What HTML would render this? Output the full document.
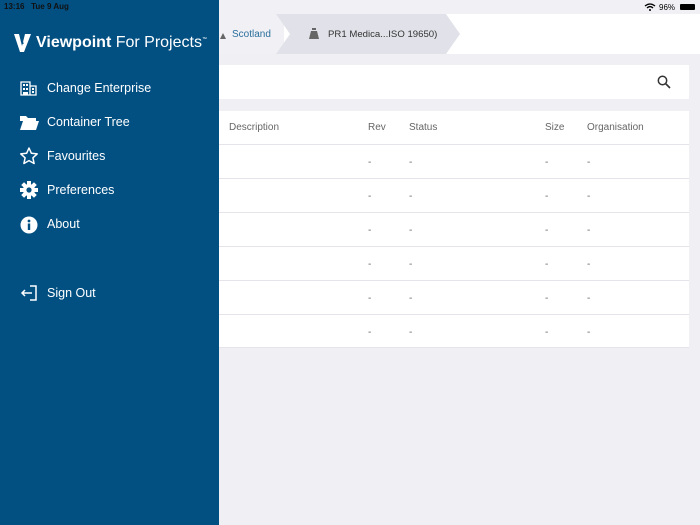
<!DOCTYPE html>
<html><head><style>
*{margin:0;padding:0;box-sizing:border-box}
body{width:700px;height:525px;overflow:hidden;background:#efeff4;font-family:"Liberation Sans",sans-serif;position:relative}
.abs{position:absolute}
.side{left:0;top:0;width:219px;height:525px;background:#024f82;color:#fff}
.item{position:absolute;left:47px;font-size:12.5px;color:#fff}
.ic{position:absolute;left:20px}
.hdr{font-size:10px;color:#555}
.cell{position:absolute;font-size:10px;color:#666}
.row{position:absolute;left:219px;width:470px;height:1px;background:#e4e4ea}
</style></head><body>
<div class="abs" style="left:0;top:0;width:700px;height:14px;background:#f0f0f5"></div>
<div class="abs" style="left:219px;top:14px;width:481px;height:40px;background:#fff"></div>
<div class="abs" style="left:219px;top:14px;width:65px;height:40px;background:#f0f0f5"></div>
<svg class="abs" style="left:276px;top:14px" width="190" height="40"><polygon points="0,0 170,0 184,20 170,40 0,40 14,20" fill="#e1e2e9"/></svg>
<div class="abs" style="left:232px;top:29px;font-size:10px;color:#2b6f9c">Scotland</div>
<svg class="abs" style="left:219px;top:30px" width="8" height="10"><path d="M1 9 L4 3 L7 9Z" fill="#666"/></svg>
<svg class="abs" style="left:308px;top:27px" width="12" height="14"><path d="M4 1h4v2h-4z M3 4h6l2 8h-10z" fill="#666"/></svg>
<div class="abs" style="left:328px;top:29px;font-size:9.6px;color:#333">PR1 Medica...ISO 19650)</div>
<div class="abs" style="left:659px;top:3px;font-size:8px;color:#000">96%</div>
<svg class="abs" style="left:644px;top:3px" width="12" height="8"><path d="M1 3 Q6 -1 11 3 M3 5 Q6 2 9 5" stroke="#000" stroke-width="1.3" fill="none"/><circle cx="6" cy="7" r="1" fill="#000"/></svg>
<div class="abs" style="left:680px;top:4px;width:15px;height:6px;background:#000;border-radius:1px"></div>
<div class="abs" style="left:219px;top:65px;width:470px;height:34px;background:#fff"></div>
<svg class="abs" style="left:657px;top:75px" width="14" height="14"><circle cx="5.5" cy="5.5" r="4.2" stroke="#333" stroke-width="1.5" fill="none"/><path d="M8.5 8.5 L13 13" stroke="#333" stroke-width="1.6"/></svg>
<div class="abs" style="left:219px;top:111px;width:470px;height:237px;background:#fff"></div>
<div class="cell hdr" style="left:229px;top:122px">Description</div>
<div class="cell hdr" style="left:368px;top:122px">Rev</div>
<div class="cell hdr" style="left:409px;top:122px">Status</div>
<div class="cell hdr" style="left:545px;top:122px">Size</div>
<div class="cell hdr" style="left:587px;top:122px">Organisation</div>
<div class="row" style="top:144px"></div>
<div class="row" style="top:178px"></div>
<div class="row" style="top:212px"></div>
<div class="row" style="top:246px"></div>
<div class="row" style="top:280px"></div>
<div class="row" style="top:314px"></div>
<div class="row" style="top:347px"></div>
<div style="position:absolute;left:0;top:1px">
<div class="cell" style="left:368px;top:156px">-</div><div class="cell" style="left:409px;top:156px">-</div><div class="cell" style="left:545px;top:156px">-</div><div class="cell" style="left:587px;top:156px">-</div>
<div class="cell" style="left:368px;top:190px">-</div><div class="cell" style="left:409px;top:190px">-</div><div class="cell" style="left:545px;top:190px">-</div><div class="cell" style="left:587px;top:190px">-</div>
<div class="cell" style="left:368px;top:224px">-</div><div class="cell" style="left:409px;top:224px">-</div><div class="cell" style="left:545px;top:224px">-</div><div class="cell" style="left:587px;top:224px">-</div>
<div class="cell" style="left:368px;top:258px">-</div><div class="cell" style="left:409px;top:258px">-</div><div class="cell" style="left:545px;top:258px">-</div><div class="cell" style="left:587px;top:258px">-</div>
<div class="cell" style="left:368px;top:292px">-</div><div class="cell" style="left:409px;top:292px">-</div><div class="cell" style="left:545px;top:292px">-</div><div class="cell" style="left:587px;top:292px">-</div>
<div class="cell" style="left:368px;top:326px">-</div><div class="cell" style="left:409px;top:326px">-</div><div class="cell" style="left:545px;top:326px">-</div><div class="cell" style="left:587px;top:326px">-</div>
</div>
<div class="abs side">
<div class="abs" style="left:4px;top:2px;font-size:8px;color:#111;font-weight:bold">13:16&nbsp;&nbsp; Tue 9 Aug</div>
<svg class="abs" style="left:14px;top:34px" width="18" height="19"><path d="M0 0h5l3 12 3-12h6l-7 18h-4z" fill="#fff"/><path d="M6 0l3 10" stroke="#024f82" stroke-width="1.5"/></svg>
<div class="abs" style="left:36px;top:34px;font-size:16px;white-space:nowrap"><span style="font-weight:600">Viewpoint</span> For Projects<sup style="font-size:5px">™</sup></div>
<svg class="ic" style="top:80px" width="18" height="16"><path d="M1 2h9v13h-9z M10 6h6v9h-6z" fill="none" stroke="#fff" stroke-width="1.3"/><path d="M3 4h2v2h-2z M6 4h2v2h-2z M3 8h2v2h-2z M6 8h2v2h-2z M12 8h2v2h-2z M12 11h2v2h-2z M3 12h5v3h-5z" fill="#fff"/></svg>
<div class="item" style="top:81px">Change Enterprise</div>
<svg class="ic" style="top:115px" width="19" height="15"><path d="M0 1h6l2 2h8v3h-16z" fill="#fff"/><path d="M3 6h16l-3 9h-16z" fill="#fff"/></svg>
<div class="item" style="top:115px">Container Tree</div>
<svg class="ic" style="top:147px" width="18" height="18"><path d="M9 1l2.4 5.3 5.8.6-4.3 3.9 1.2 5.7-5.1-2.9-5.1 2.9 1.2-5.7-4.3-3.9 5.8-.6z" fill="none" stroke="#fff" stroke-width="1.5" stroke-linejoin="round"/></svg>
<div class="item" style="top:149px">Favourites</div>
<svg class="ic" style="top:181px" width="18" height="18"><g transform="translate(9 9)" fill="#fff"><circle r="6"/><g id="t"><rect x="-2" y="-9" width="4" height="4"/></g><use href="#t" transform="rotate(45)"/><use href="#t" transform="rotate(90)"/><use href="#t" transform="rotate(135)"/><use href="#t" transform="rotate(180)"/><use href="#t" transform="rotate(225)"/><use href="#t" transform="rotate(270)"/><use href="#t" transform="rotate(315)"/><circle r="2.6" fill="#024f82"/></g></svg>
<div class="item" style="top:183px">Preferences</div>
<svg class="ic" style="top:216px" width="18" height="18"><circle cx="9" cy="9" r="8.5" fill="#fff"/><circle cx="9" cy="5" r="1.4" fill="#024f82"/><rect x="7.8" y="7.5" width="2.4" height="6.5" fill="#024f82"/></svg>
<div class="item" style="top:217px">About</div>
<svg class="ic" style="top:285px" width="18" height="16"><path d="M10 1h6v14h-6" fill="none" stroke="#fff" stroke-width="1.5"/><path d="M12 8h-10 M5 5l-3 3 3 3" fill="none" stroke="#fff" stroke-width="1.5"/></svg>
<div class="item" style="top:286px">Sign Out</div>
</div>
</body></html>
